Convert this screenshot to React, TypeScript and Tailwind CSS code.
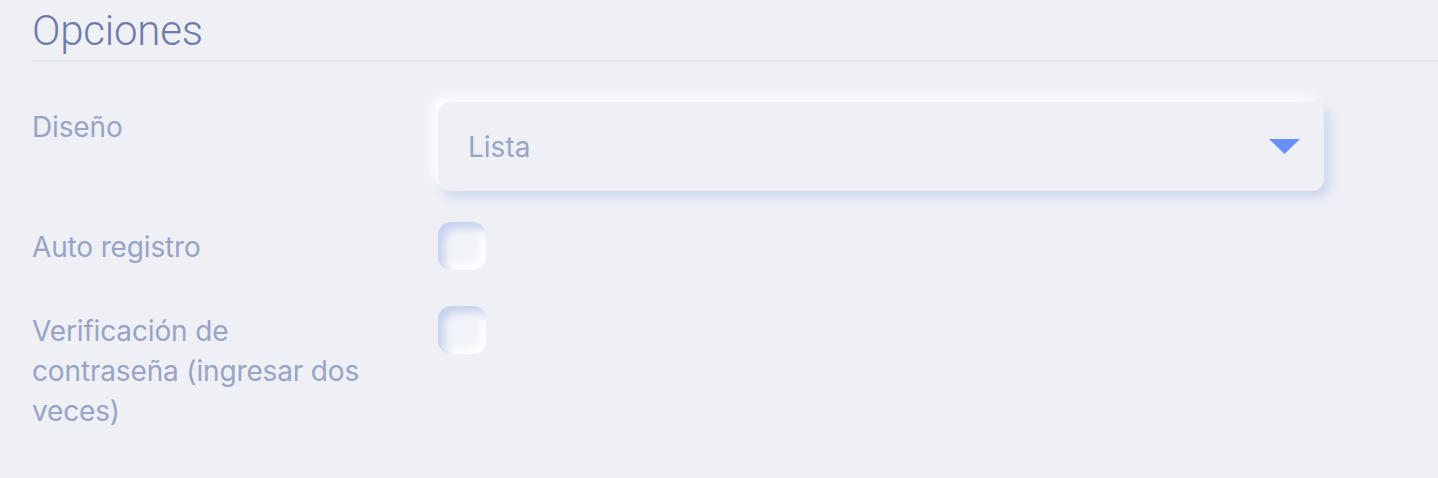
import React, { useState } from 'react';

const labelClass = 'w-[340px] shrink-0 pt-[5px] text-[28px] leading-[40px] tracking-[-0.15px] text-[#98a4c5]';

const NeuCheckbox: React.FC<{ checked: boolean; onChange: () => void }> = ({ checked, onChange }) => (
  <button
    type="button"
    onClick={onChange}
    className="h-12 w-12 shrink-0 rounded-[13px] bg-[#f2f4f9] shadow-[inset_6px_6px_10px_#c4d0ee,inset_-5px_-5px_9px_#ffffff]"
  >
    {checked && <span className="block text-[#6a8ef5]">✓</span>}
  </button>
);

const App: React.FC = () => {
  const [autoRegistro, setAutoRegistro] = useState(false);
  const [verificacion, setVerificacion] = useState(false);

  return (
    <div className="min-h-[478px] w-full bg-[#eef0f5] font-['Inter',sans-serif]">
      <div className="pl-8">
        {/* Title */}
        <h2 className="pt-[5px] font-['Roboto',sans-serif] text-[42px] font-light leading-[52px] tracking-[-0.2px] text-[#6c7ba8]">
          Opciones
        </h2>
        <div className="mt-[3px] h-[2px] bg-[#e1e3e8]" />

        {/* Diseño */}
        <div className="mt-10 flex items-start gap-[66px]">
          <label className={labelClass}>Diseño</label>
          <div className="flex h-[89px] w-[886px] items-center justify-between rounded-[12px] bg-[#eef0f5] pl-[30px] pr-[24px] shadow-[-6px_-6px_12px_rgba(255,255,255,0.9),5px_6px_12px_rgba(170,188,228,0.55)]">
            <span className="text-[28px] text-[#98a4c5]">Lista</span>
            <svg width="31" height="15" viewBox="0 0 31 15">
              <polygon points="0,0 31,0 15.5,15" fill="#6a8ef5" />
            </svg>
          </div>
        </div>

        {/* Auto registro */}
        <div className="mt-[31px] flex items-start gap-[66px]">
          <label className={labelClass}>Auto registro</label>
          <NeuCheckbox checked={autoRegistro} onChange={() => setAutoRegistro(!autoRegistro)} />
        </div>

        {/* Verificación */}
        <div className="mt-[36px] flex items-start gap-[66px]">
          <label className={labelClass}>Verificación de contraseña (ingresar dos veces)</label>
          <NeuCheckbox checked={verificacion} onChange={() => setVerificacion(!verificacion)} />
        </div>
      </div>
    </div>
  );
};

export default App;
